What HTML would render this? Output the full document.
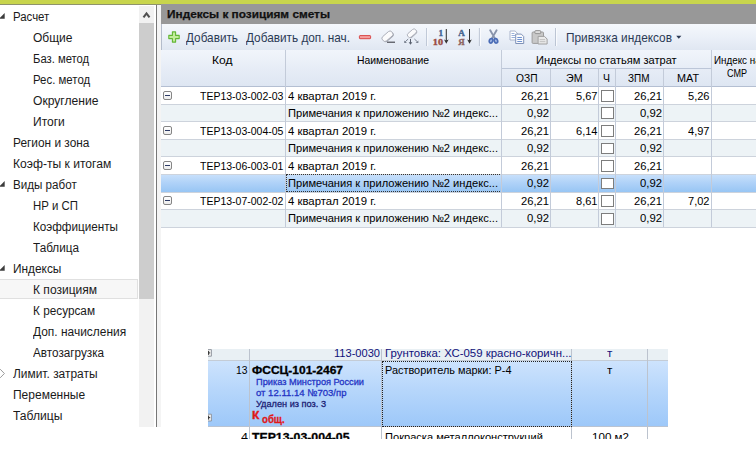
<!DOCTYPE html>
<html lang="ru"><head><meta charset="utf-8"><title>Индексы к позициям сметы</title>
<style>
html,body{margin:0;padding:0;background:#fff;}
body{width:756px;height:471px;position:relative;overflow:hidden;font-family:"Liberation Sans",sans-serif;}
.b{position:absolute;}
.t{position:absolute;white-space:nowrap;line-height:1em;transform-origin:0 0;}
.vl{position:absolute;width:1px;background:#c3cbd9;}
.hl{position:absolute;height:1px;background:#cdd3dc;}
.cb{position:absolute;width:10.5px;height:10.5px;border:1px solid #7d7d7d;background:#fff;}
.ex{position:absolute;width:6.8px;height:6.9px;border:1px solid #858585;border-radius:2px;background:linear-gradient(#fff,#ececec);}
.ex i{position:absolute;left:.9px;right:.9px;top:2.8px;height:1.2px;background:#2c3a66;}
</style></head><body>
<!-- top strip -->
<div class="b" style="left:0;top:0;width:756px;height:3.7px;background:#c8d54d"></div>
<div class="b" style="left:0;top:3.7px;width:161px;height:1.1px;background:#8f936c"></div>

<!-- left tree panel -->
<div class="b" style="left:0;top:278.7px;width:137px;height:18.8px;background:#f7f7f7;border:1px solid #e0e0e0;border-left:none"></div>
<svg class="b" style="left:0;top:0" width="8" height="430" viewBox="0 0 8 430">
 <path d="M4.7 13.1V18.7H-0.9Z" fill="#3c3c3c"/>
 <path d="M4.7 181.1V186.7H-0.9Z" fill="#3c3c3c"/>
 <path d="M4.7 265.1V270.7H-0.9Z" fill="#3c3c3c"/>
 <path d="M0.2 369.2L4.4 373.5L0.2 377.8" fill="none" stroke="#9a9a9a" stroke-width="1"/>
</svg>
<!-- scrollbar -->
<div class="b" style="left:139px;top:5.5px;width:15px;height:18px;background:#f1f1f1"></div>
<div class="b" style="left:139px;top:23px;width:15px;height:276px;background:#cdcdcd"></div>
<div class="b" style="left:139px;top:299px;width:15px;height:128px;background:#f2f2f2"></div>
<svg class="b" style="left:139px;top:4px" width="16" height="20" viewBox="0 0 16 20"><path d="M4.5 13.3L7.5 9.4L10.5 13.3" fill="none" stroke="#505050" stroke-width="2.1"/></svg>
<div class="b" style="left:156px;top:4.5px;width:1px;height:422.5px;background:#777"></div>
<div class="b" style="left:157px;top:4.5px;width:4px;height:422.5px;background:#f4f4f4"></div>

<!-- title bar -->
<div class="b" style="left:161px;top:3.7px;width:595px;height:20.3px;background:#989898"></div>
<!-- toolbar -->
<div class="b" style="left:161px;top:24px;width:595px;height:26.8px;background:linear-gradient(#f5f8fc,#ebf0f8 50%,#e0e7f2);border-bottom:1px solid #9fabc0;border-left:1px solid #b4bccb;box-sizing:border-box"></div>

<svg class="b" style="left:161px;top:24px" width="595" height="26" viewBox="161 24 595 26">
 <!-- plus -->
 <path d="M172.4 31.9h3.2v3.5h3.6v3.2h-3.6v3.5h-3.2v-3.5h-3.6v-3.2h3.6z" fill="#c2ec9a" stroke="#62b634" stroke-width="1.1" stroke-linejoin="round"/>
 <!-- minus -->
 <rect x="359.4" y="35.6" width="11.2" height="3.1" rx="0.6" fill="#f3a0a0" stroke="#d94848" stroke-width="1"/>
 <!-- eraser 1 -->
 <g transform="translate(387.7,36.5) rotate(-41)">
  <rect x="-5.9" y="-2.2" width="12.2" height="5.8" rx="2.3" fill="#9fa3ad"/>
  <rect x="-6.1" y="-3.2" width="12.2" height="5.7" rx="2.3" fill="#fbfbfc" stroke="#a9acb6" stroke-width=".9"/>
 </g>
 <path d="M387 42.2H395" stroke="#3c3e46" stroke-width="1.1"/>
 <!-- eraser 2 -->
 <g transform="translate(412.2,33.4) rotate(-41)">
  <rect x="-5" y="-1.8" width="10.2" height="4.8" rx="2" fill="#a6aab4"/>
  <rect x="-5.2" y="-2.7" width="10.2" height="4.8" rx="2" fill="#fbfbfc" stroke="#aeb1bb" stroke-width=".9"/>
 </g>
 <path d="M410.5 39V43.6" stroke="#59606e" stroke-width="1"/><path d="M408.7 42.2H412.3L410.5 44.8Z" fill="#59606e"/>
 <path d="M408.2 39L405.2 41.8" stroke="#7a8290" stroke-width="1"/><path d="M404.2 40.4V43H407Z" fill="#7a8290"/>
 <path d="M414.4 39L417.4 41.8" stroke="#7a8290" stroke-width="1"/><path d="M418.4 40.4V43H415.6Z" fill="#7a8290"/>
 <!-- separators -->
 <path d="M426.7 28V46M479.4 28V46M555.6 28V46" stroke="#b7c0d0" stroke-width="1"/>
 <path d="M427.7 28V46M480.4 28V46M556.6 28V46" stroke="#fbfcfe" stroke-width="1"/>
 <!-- sort arrows -->
 <path d="M446.3 29V42" stroke="#333" stroke-width="1.05"/><path d="M444 39.6L446.3 40.6L448.6 39.6L446.3 43.7Z" fill="#333"/>
 <path d="M469.5 29V42" stroke="#333" stroke-width="1.05"/><path d="M467.2 39.6L469.5 40.6L471.8 39.6L469.5 43.7Z" fill="#333"/>
 <g font-family="Liberation Serif, serif" font-weight="bold" font-size="9.2" stroke-width=".35" lengthAdjust="spacingAndGlyphs">
 <text x="438.6" y="35.7" textLength="4.6" lengthAdjust="spacingAndGlyphs" fill="#3f6296" stroke="#3f6296">1</text>
 <text x="432.8" y="44.6" textLength="10.2" lengthAdjust="spacingAndGlyphs" fill="#9a4a40" stroke="#9a4a40">10</text>
 <text x="458.2" y="36.3" textLength="6.6" lengthAdjust="spacingAndGlyphs" fill="#46668f" stroke="#46668f">А</text>
 <text x="458.3" y="44.6" textLength="6.4" lengthAdjust="spacingAndGlyphs" fill="#8c625e" stroke="#8c625e">Я</text>
 </g>
 <!-- scissors -->
 <g transform="translate(489,30)">
  <path d="M1.2 .2L6 8.6M7.6 .2L2.8 8.6" stroke="#8994ab" stroke-width="1.9" fill="none" stroke-linecap="round"/>
  <ellipse cx="2" cy="10.8" rx="1.7" ry="2.3" transform="rotate(18 2 10.8)" fill="#a9bde6" stroke="#4a6cb6" stroke-width="1.7"/>
  <ellipse cx="6.9" cy="10.8" rx="1.7" ry="2.3" transform="rotate(-18 6.9 10.8)" fill="#a9bde6" stroke="#4a6cb6" stroke-width="1.7"/>
 </g>
 <!-- copy -->
 <g transform="translate(509.5,30.5)">
  <path d="M.5 .5H5.6L8 2.9V9.5H.5Z" fill="#ffffff" stroke="#a3aec6" stroke-width=".9"/>
  <path d="M2 3H5M2 5H6M2 7H6" stroke="#8fa8d6" stroke-width=".9"/>
  <path d="M6.2 3.6H11.8L14.2 6V13H6.2Z" fill="#fafbfd" stroke="#7f92b8" stroke-width="1"/>
  <path d="M7.8 7H12.4M7.8 9H12.6M7.8 11H12.6" stroke="#5f86cc" stroke-width=".9"/>
 </g>
 <!-- paste -->
 <g transform="translate(531.5,30)">
  <rect x=".6" y="2" width="11.4" height="11.4" rx="1" fill="#c8c8c8" stroke="#9c9c9c" stroke-width="1"/>
  <rect x="3.4" y=".6" width="5.8" height="3" rx=".8" fill="#dcdcdc" stroke="#8c8c8c" stroke-width=".9"/>
  <path d="M6.6 6.4H13L15.6 9V14H6.6Z" fill="#e9e9e9" stroke="#a0a0a0" stroke-width="1"/>
  <path d="M8.2 9.6H13.6M8.2 11.6H13.8" stroke="#bdbdbd" stroke-width=".9"/>
 </g>
 <!-- dropdown arrow -->
 <path d="M676.2 35.7H681.4L678.8 38.8Z" fill="#2b3a55"/>
</svg>


<!-- grid header -->
<div class="b" style="left:161px;top:50px;width:595px;height:36.3px;background:linear-gradient(#f1f5fb,#e6ecf6 55%,#dee6f2)"></div>
<div class="hl" style="left:501.5px;top:68px;width:210px;background:#bcc6d8"></div>
<div class="hl" style="left:161px;top:86px;width:595px;background:#b4bfd2"></div>

<!-- rows -->
<div class="b" style="left:161px;top:86.50px;width:595px;height:17.55px;background:#ffffff"></div>
<div class="cb" style="left:601px;top:89.90px;width:11px;height:9.8px"></div>
<div class="ex" style="left:163.1px;top:91.00px"><i></i></div>
<div class="b" style="left:161px;top:104.05px;width:595px;height:17.55px;background:#edf3f6"></div>
<div class="cb" style="left:601px;top:107.45px;width:11px;height:9.8px"></div>
<div class="b" style="left:161px;top:121.60px;width:595px;height:17.55px;background:#ffffff"></div>
<div class="cb" style="left:601px;top:125.00px;width:11px;height:9.8px"></div>
<div class="ex" style="left:163.1px;top:126.10px"><i></i></div>
<div class="b" style="left:161px;top:139.15px;width:595px;height:17.55px;background:#edf3f6"></div>
<div class="cb" style="left:601px;top:142.55px;width:11px;height:9.8px"></div>
<div class="b" style="left:161px;top:156.70px;width:595px;height:17.55px;background:#ffffff"></div>
<div class="cb" style="left:601px;top:160.10px;width:11px;height:9.8px"></div>
<div class="ex" style="left:163.1px;top:161.20px"><i></i></div>
<div class="b" style="left:161px;top:174.25px;width:595px;height:17.55px;background:linear-gradient(#cae1fb,#afd2f8 50%,#98c5f4)"></div>
<div class="cb" style="left:601px;top:177.65px;width:11px;height:9.8px"></div>
<div class="b" style="left:161px;top:191.80px;width:595px;height:17.55px;background:#ffffff"></div>
<div class="cb" style="left:601px;top:195.20px;width:11px;height:9.8px"></div>
<div class="ex" style="left:163.1px;top:196.30px"><i></i></div>
<div class="b" style="left:161px;top:209.35px;width:595px;height:17.55px;background:#edf3f6"></div>
<div class="cb" style="left:601px;top:212.75px;width:11px;height:9.8px"></div>
<div class="hl" style="left:161px;top:103.75px;width:595px"></div>
<div class="hl" style="left:161px;top:121.30px;width:595px"></div>
<div class="hl" style="left:161px;top:138.85px;width:595px"></div>
<div class="hl" style="left:161px;top:156.40px;width:595px"></div>
<div class="hl" style="left:161px;top:173.95px;width:595px"></div>
<div class="hl" style="left:161px;top:191.50px;width:595px"></div>
<div class="hl" style="left:161px;top:209.05px;width:595px"></div>
<div class="hl" style="left:161px;top:226.60px;width:595px"></div>
<div class="b" style="left:286.2px;top:174.45px;width:214px;height:15.4px;border:1px dotted #333"></div>
<div class="vl" style="left:284.9px;top:50px;height:177.0px"></div>
<div class="vl" style="left:501.3px;top:50px;height:177.0px"></div>
<div class="vl" style="left:549.8px;top:68.5px;height:158.5px"></div>
<div class="vl" style="left:597.8px;top:68.5px;height:158.5px"></div>
<div class="vl" style="left:614.7px;top:68.5px;height:158.5px"></div>
<div class="vl" style="left:662.8px;top:68.5px;height:158.5px"></div>
<div class="vl" style="left:710.8px;top:50px;height:177.0px"></div>

<!-- inset -->

<div class="b" style="left:208px;top:348.8px;width:460px;height:12px;background:#e9f0f4"></div>
<div class="b" style="left:208px;top:360.8px;width:460px;height:65.4px;background:linear-gradient(#cde3fd,#b6d6fb 45%,#9dc8f9)"></div>
<div class="hl" style="left:208px;top:360.3px;width:460px;background:#c4ccd6"></div>
<div class="hl" style="left:208px;top:425.9px;width:460px;background:#b9c3d2"></div>
<div class="vl" style="left:249.2px;top:348.8px;height:90.4px;background:#bcc3ce"></div>
<div class="vl" style="left:380.9px;top:348.8px;height:90.4px;background:#bcc3ce"></div>
<div class="vl" style="left:571px;top:348.8px;height:90.4px;background:#bcc3ce"></div>
<div class="vl" style="left:646.5px;top:348.8px;height:90.4px;background:#bcc3ce"></div>
<div class="b" style="left:381.6px;top:361.4px;width:188.6px;height:63.2px;border:1px dotted #222"></div>
<svg class="b" style="left:208px;top:348px" width="8" height="80" viewBox="0 0 8 80">
 <path d="M-3 1.6H3.4V8.2H-3Z" fill="#f4f4f4" stroke="#8a8e98" stroke-width=".9"/>
 <path d="M-1 4.9H2.2M.6 2.9V6.9" stroke="#333" stroke-width="1"/>
 <path d="M-3 66.2H3.4V73H-3Z" fill="#f4f4f4" stroke="#8a8e98" stroke-width=".9"/>
 <path d="M-1 69.6H2.2M.6 67.6V71.6" stroke="#333" stroke-width="1"/>
</svg>


<div class="t" style="left:13.2px;top:11.30px;font-size:12.0px;transform:scaleX(0.9510);color:#1a1a1a;">Расчет</div>
<div class="t" style="left:32.5px;top:32.30px;font-size:12.0px;transform:scaleX(1.0008);color:#1a1a1a;">Общие</div>
<div class="t" style="left:32.5px;top:53.30px;font-size:12.0px;transform:scaleX(0.9384);color:#1a1a1a;">Баз. метод</div>
<div class="t" style="left:32.5px;top:74.30px;font-size:12.0px;transform:scaleX(0.9514);color:#1a1a1a;">Рес. метод</div>
<div class="t" style="left:32.5px;top:95.30px;font-size:12.0px;transform:scaleX(1.0089);color:#1a1a1a;">Округление</div>
<div class="t" style="left:32.5px;top:116.30px;font-size:12.0px;transform:scaleX(1.0016);color:#1a1a1a;">Итоги</div>
<div class="t" style="left:13.2px;top:137.30px;font-size:12.0px;transform:scaleX(0.9890);color:#1a1a1a;">Регион и зона</div>
<div class="t" style="left:13.2px;top:158.30px;font-size:12.0px;transform:scaleX(1.0084);color:#1a1a1a;">Коэф-ты к итогам</div>
<div class="t" style="left:13.2px;top:179.30px;font-size:12.0px;transform:scaleX(0.9681);color:#1a1a1a;">Виды работ</div>
<div class="t" style="left:32.5px;top:200.30px;font-size:12.0px;transform:scaleX(0.9505);color:#1a1a1a;">НР и СП</div>
<div class="t" style="left:32.5px;top:221.30px;font-size:12.0px;transform:scaleX(0.9732);color:#1a1a1a;">Коэффициенты</div>
<div class="t" style="left:32.5px;top:242.30px;font-size:12.0px;transform:scaleX(0.9774);color:#1a1a1a;">Таблица</div>
<div class="t" style="left:13.2px;top:263.30px;font-size:12.0px;transform:scaleX(0.9890);color:#1a1a1a;">Индексы</div>
<div class="t" style="left:32.5px;top:284.30px;font-size:12.0px;transform:scaleX(1.0033);color:#1a1a1a;">К позициям</div>
<div class="t" style="left:32.5px;top:305.30px;font-size:12.0px;transform:scaleX(0.9819);color:#1a1a1a;">К ресурсам</div>
<div class="t" style="left:32.5px;top:326.30px;font-size:12.0px;transform:scaleX(0.9956);color:#1a1a1a;">Доп. начисления</div>
<div class="t" style="left:32.5px;top:347.30px;font-size:12.0px;transform:scaleX(0.9767);color:#1a1a1a;">Автозагрузка</div>
<div class="t" style="left:13.2px;top:368.30px;font-size:12.0px;transform:scaleX(0.9943);color:#1a1a1a;">Лимит. затраты</div>
<div class="t" style="left:13.2px;top:389.30px;font-size:12.0px;transform:scaleX(0.9997);color:#1a1a1a;">Переменные</div>
<div class="t" style="left:13.2px;top:410.30px;font-size:12.0px;transform:scaleX(1.0078);color:#1a1a1a;">Таблицы</div>
<div class="t" style="left:167.0px;top:8.55px;font-size:11.5px;transform:scaleX(1.0275);color:#111;font-weight:bold;-webkit-text-stroke:0.25px #111;">Индексы к позициям сметы</div>
<div class="t" style="left:186.0px;top:32.20px;font-size:12.2px;transform:scaleX(0.9652);color:#2b3a55;">Добавить</div>
<div class="t" style="left:246.0px;top:32.20px;font-size:12.2px;transform:scaleX(0.9674);color:#2b3a55;">Добавить доп. нач.</div>
<div class="t" style="left:565.5px;top:32.20px;font-size:12.2px;transform:scaleX(0.9723);color:#2b3a55;">Привязка индексов</div>
<div class="t" style="left:212.0px;top:55.70px;font-size:10.2px;transform:scaleX(1.1830);color:#000;">Код</div>
<div class="t" style="left:356.5px;top:55.70px;font-size:10.2px;transform:scaleX(1.0195);color:#000;">Наименование</div>
<div class="t" style="left:535.7px;top:55.70px;font-size:10.2px;transform:scaleX(1.0877);color:#000;">Индексы по статьям затрат</div>
<div class="t" style="left:713.7px;top:55.70px;font-size:10.2px;transform:scaleX(0.9636);color:#000;">Индекс на</div>
<div class="t" style="left:726.5px;top:68.70px;font-size:10.2px;transform:scaleX(0.8877);color:#000;">СМР</div>
<div class="t" style="left:515.5px;top:73.70px;font-size:10.2px;transform:scaleX(1.0044);color:#000;">ОЗП</div>
<div class="t" style="left:566.0px;top:73.70px;font-size:10.2px;transform:scaleX(1.0435);color:#000;">ЭМ</div>
<div class="t" style="left:603.0px;top:73.70px;font-size:10.2px;transform:scaleX(1.0299);color:#000;">Ч</div>
<div class="t" style="left:628.0px;top:73.70px;font-size:10.2px;transform:scaleX(0.9787);color:#000;">ЗПМ</div>
<div class="t" style="left:676.5px;top:73.70px;font-size:10.2px;transform:scaleX(1.0618);color:#000;">МАТ</div>
<div class="t" style="left:200.3px;top:91.70px;font-size:10.2px;transform:scaleX(1.0298);color:#000;">ТЕР13-03-002-03</div>
<div class="t" style="left:288.0px;top:91.70px;font-size:10.2px;transform:scaleX(1.1143);color:#000;">4 квартал 2019 г.</div>
<div class="t" style="left:521.0px;top:91.70px;font-size:10.2px;transform:scaleX(1.0980);color:#000;">26,21</div>
<div class="t" style="left:634.0px;top:91.70px;font-size:10.2px;transform:scaleX(1.0980);color:#000;">26,21</div>
<div class="t" style="left:575.5px;top:91.70px;font-size:10.2px;transform:scaleX(1.0843);color:#000;">5,67</div>
<div class="t" style="left:688.0px;top:91.70px;font-size:10.2px;transform:scaleX(1.0843);color:#000;">5,26</div>
<div class="t" style="left:288.0px;top:108.70px;font-size:10.2px;transform:scaleX(1.0926);color:#000;">Примечания к приложению №2 индекс...</div>
<div class="t" style="left:527.0px;top:108.70px;font-size:10.2px;transform:scaleX(1.1095);color:#000;">0,92</div>
<div class="t" style="left:640.0px;top:108.70px;font-size:10.2px;transform:scaleX(1.1095);color:#000;">0,92</div>
<div class="t" style="left:200.3px;top:126.70px;font-size:10.2px;transform:scaleX(1.0298);color:#000;">ТЕР13-03-004-05</div>
<div class="t" style="left:288.0px;top:126.70px;font-size:10.2px;transform:scaleX(1.1143);color:#000;">4 квартал 2019 г.</div>
<div class="t" style="left:521.0px;top:126.70px;font-size:10.2px;transform:scaleX(1.0980);color:#000;">26,21</div>
<div class="t" style="left:634.0px;top:126.70px;font-size:10.2px;transform:scaleX(1.0980);color:#000;">26,21</div>
<div class="t" style="left:575.5px;top:126.70px;font-size:10.2px;transform:scaleX(1.0843);color:#000;">6,14</div>
<div class="t" style="left:688.0px;top:126.70px;font-size:10.2px;transform:scaleX(1.0843);color:#000;">4,97</div>
<div class="t" style="left:288.0px;top:143.70px;font-size:10.2px;transform:scaleX(1.0926);color:#000;">Примечания к приложению №2 индекс...</div>
<div class="t" style="left:527.0px;top:143.70px;font-size:10.2px;transform:scaleX(1.1095);color:#000;">0,92</div>
<div class="t" style="left:640.0px;top:143.70px;font-size:10.2px;transform:scaleX(1.1095);color:#000;">0,92</div>
<div class="t" style="left:200.3px;top:161.70px;font-size:10.2px;transform:scaleX(1.0298);color:#000;">ТЕР13-06-003-01</div>
<div class="t" style="left:288.0px;top:161.70px;font-size:10.2px;transform:scaleX(1.1143);color:#000;">4 квартал 2019 г.</div>
<div class="t" style="left:521.0px;top:161.70px;font-size:10.2px;transform:scaleX(1.0980);color:#000;">26,21</div>
<div class="t" style="left:634.0px;top:161.70px;font-size:10.2px;transform:scaleX(1.0980);color:#000;">26,21</div>
<div class="t" style="left:288.0px;top:178.70px;font-size:10.2px;transform:scaleX(1.0926);color:#000;">Примечания к приложению №2 индекс...</div>
<div class="t" style="left:527.0px;top:178.70px;font-size:10.2px;transform:scaleX(1.1095);color:#000;">0,92</div>
<div class="t" style="left:640.0px;top:178.70px;font-size:10.2px;transform:scaleX(1.1095);color:#000;">0,92</div>
<div class="t" style="left:200.3px;top:196.70px;font-size:10.2px;transform:scaleX(1.0298);color:#000;">ТЕР13-07-002-02</div>
<div class="t" style="left:288.0px;top:196.70px;font-size:10.2px;transform:scaleX(1.1143);color:#000;">4 квартал 2019 г.</div>
<div class="t" style="left:521.0px;top:196.70px;font-size:10.2px;transform:scaleX(1.0980);color:#000;">26,21</div>
<div class="t" style="left:634.0px;top:196.70px;font-size:10.2px;transform:scaleX(1.0980);color:#000;">26,21</div>
<div class="t" style="left:575.5px;top:196.70px;font-size:10.2px;transform:scaleX(1.0843);color:#000;">8,61</div>
<div class="t" style="left:688.0px;top:196.70px;font-size:10.2px;transform:scaleX(1.0843);color:#000;">7,02</div>
<div class="t" style="left:288.0px;top:213.70px;font-size:10.2px;transform:scaleX(1.0926);color:#000;">Примечания к приложению №2 индекс...</div>
<div class="t" style="left:527.0px;top:213.70px;font-size:10.2px;transform:scaleX(1.1095);color:#000;">0,92</div>
<div class="t" style="left:640.0px;top:213.70px;font-size:10.2px;transform:scaleX(1.1095);color:#000;">0,92</div>
<div class="t" style="left:333.5px;top:348.70px;font-size:10.2px;transform:scaleX(1.0876);color:#10107a;">113-0030</div>
<div class="t" style="left:384.5px;top:348.70px;font-size:10.2px;transform:scaleX(1.1202);color:#10107a;">Грунтовка: ХС-059 красно-коричн...</div>
<div class="t" style="left:606.6px;top:348.70px;font-size:10.2px;transform:scaleX(1.1559);color:#10107a;">т</div>
<div class="t" style="left:236.0px;top:365.70px;font-size:10.2px;transform:scaleX(1.0138);color:#000;">13</div>
<div class="t" style="left:252.0px;top:364.60px;font-size:11.4px;transform:scaleX(1.0528);color:#000;font-weight:bold;-webkit-text-stroke:0.3px #000;">ФССЦ-101-2467</div>
<div class="t" style="left:384.5px;top:365.70px;font-size:10.2px;transform:scaleX(1.0705);color:#000;">Растворитель марки: Р-4</div>
<div class="t" style="left:606.6px;top:365.70px;font-size:10.2px;transform:scaleX(1.1559);color:#000;">т</div>
<div class="t" style="left:255.5px;top:376.85px;font-size:9.9px;transform:scaleX(0.9344);color:#2434c4;-webkit-text-stroke:0.3px #2434c4;">Приказ Минстроя России</div>
<div class="t" style="left:255.5px;top:387.85px;font-size:9.9px;transform:scaleX(0.9663);color:#2434c4;-webkit-text-stroke:0.3px #2434c4;">от 12.11.14 №703/пр</div>
<div class="t" style="left:255.5px;top:398.85px;font-size:9.9px;transform:scaleX(0.9304);color:#1a1c74;-webkit-text-stroke:0.3px #1a1c74;">Удален из поз. 3</div>
<div class="t" style="left:252.0px;top:410.70px;font-size:10.2px;transform:scaleX(1.1899);color:#e01818;font-weight:bold;-webkit-text-stroke:0.35px #e01818;">К</div>
<div class="t" style="left:261.6px;top:414.60px;font-size:10.4px;transform:scaleX(0.9295);color:#e01818;font-weight:bold;-webkit-text-stroke:0.3px #e01818;">общ.</div>
<div class="t" style="left:240.5px;top:432.70px;font-size:10.2px;transform:scaleX(1.2342);color:#000;">4</div>
<div class="t" style="left:252.0px;top:431.60px;font-size:11.4px;transform:scaleX(1.0768);color:#000;font-weight:bold;-webkit-text-stroke:0.3px #000;">ТЕР13-03-004-05</div>
<div class="t" style="left:384.5px;top:432.70px;font-size:10.2px;transform:scaleX(1.0880);color:#000;">Покраска металлоконструкций</div>
<div class="t" style="left:591.5px;top:432.70px;font-size:10.2px;transform:scaleX(1.1385);color:#000;">100 м2</div>
<div class="b" style="left:200px;top:439.2px;width:480px;height:32px;background:#fff"></div>
</body></html>
